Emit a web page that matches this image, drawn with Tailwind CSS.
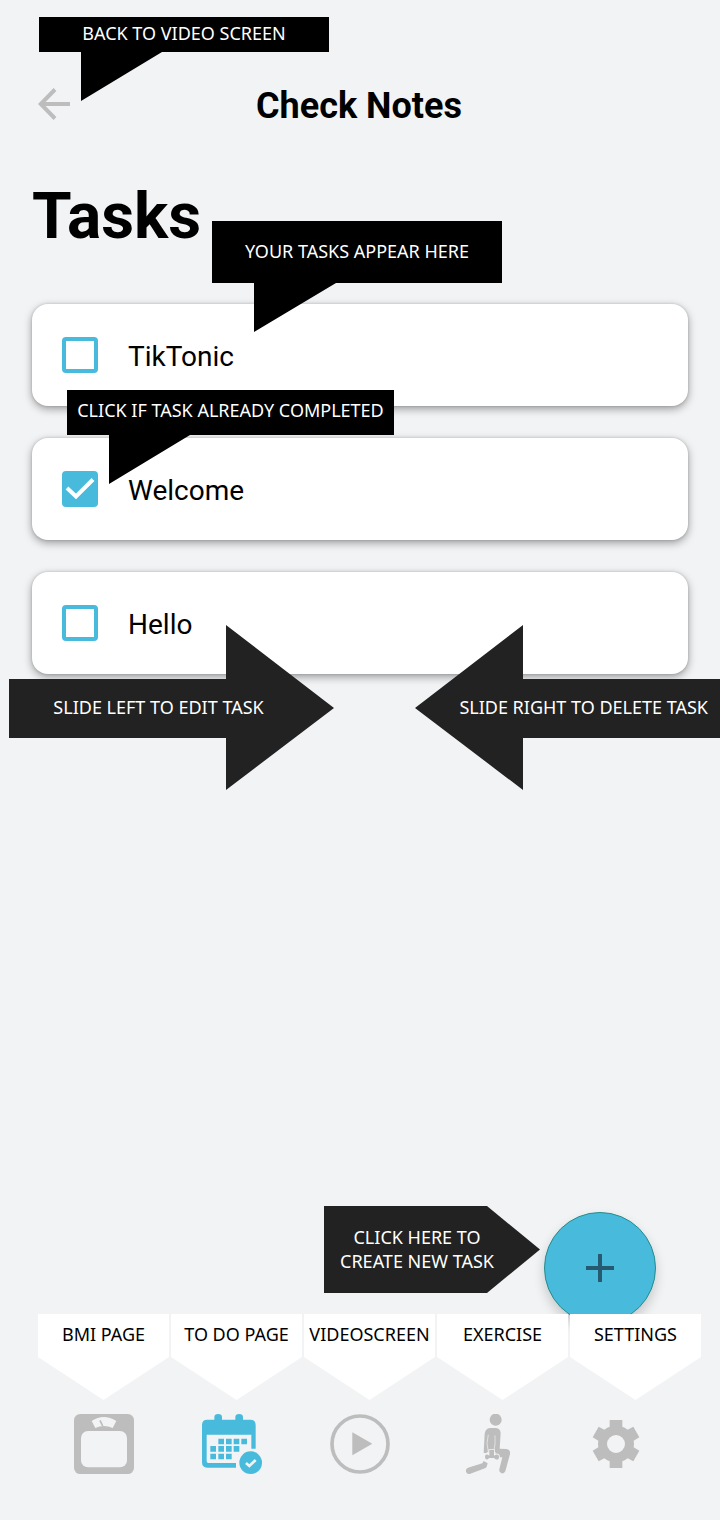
<!DOCTYPE html>
<html lang="en">
<head>
<meta charset="utf-8">
<meta name="viewport" content="width=device-width, initial-scale=1">
<title>Check Notes</title>
<script src="https://cdn.jsdelivr.net/npm/@tailwindcss/browser@4"></script>
</head>
<body class="bg-[#f1f3f5] text-black font-['Roboto',sans-serif]">
<div class="relative flex min-h-screen flex-col overflow-hidden">

  <header class="relative flex h-32 items-end px-8 pt-20">
    <button type="button" aria-label="Back" class="flex h-12 w-11 items-center justify-center text-[#bdbdbd]">
      <svg class="size-9" viewBox="0 0 36 36" fill="none" stroke="currentColor" stroke-width="4" stroke-linecap="butt" stroke-linejoin="miter"><path d="M34 18H5M19 3.500L4.800 18L19 32.500"/></svg>
    </button>
    <h2 class="flex-1 pr-[46px] text-center text-4xl leading-11 font-bold">Check Notes</h2>
    <!-- hint: back button -->
    <div class="absolute top-[17px] left-[39px] h-[84px] w-[290px] bg-black pt-1 text-center font-['Noto_Sans',sans-serif] text-lg leading-6 text-white [clip-path:polygon(0_0,100%_0,100%_35px,123px_35px,42px_84px,42px_35px,0_35px)]">BACK TO VIDEO SCREEN</div>
  </header>

  <main class="px-8 pt-12">
    <div class="relative z-10">
      <h1 class="text-[64px] leading-[82px] font-bold">Tasks</h1>
      <!-- hint: task list -->
      <div class="absolute top-[45px] left-[180px] h-[111px] w-[290px] bg-black pt-[18px] text-center font-['Noto_Sans',sans-serif] text-lg leading-6 text-white [clip-path:polygon(0_0,100%_0,100%_62px,124px_62px,42px_111px,42px_62px,0_62px)]">YOUR TASKS APPEAR HERE</div>
    </div>

    <ul class="mt-[46px] flex flex-col gap-8">
      <li class="relative rounded-2xl bg-white shadow-[0_3px_8px_rgba(0,0,0,0.36),0_0_3px_rgba(0,0,0,0.16)]">
        <label class="flex h-[102px] items-center gap-[30px] px-[30px] text-[28px] leading-9">
          <span class="grid size-9 place-items-center">
            <input type="checkbox" class="peer col-start-1 row-start-1 size-9 appearance-none rounded-[4px] border-4 border-[#48bbdd] checked:bg-[#48bbdd]">
            <svg class="pointer-events-none col-start-1 row-start-1 hidden size-9 peer-checked:block" viewBox="0 0 36 36" fill="none" stroke="#fff" stroke-width="4"><path d="M5 17L14 25.500L31 8.500"/></svg>
          </span>
          <span class="pt-1">TikTonic</span>
        </label>
      </li>
      <li class="relative rounded-2xl bg-white shadow-[0_3px_8px_rgba(0,0,0,0.36),0_0_3px_rgba(0,0,0,0.16)]">
        <label class="flex h-[102px] items-center gap-[30px] px-[30px] text-[28px] leading-9">
          <span class="grid size-9 place-items-center">
            <input type="checkbox" checked class="peer col-start-1 row-start-1 size-9 appearance-none rounded-[4px] border-4 border-[#48bbdd] checked:bg-[#48bbdd]">
            <svg class="pointer-events-none col-start-1 row-start-1 hidden size-9 peer-checked:block" viewBox="0 0 36 36" fill="none" stroke="#fff" stroke-width="4"><path d="M5 17L14 25.500L31 8.500"/></svg>
          </span>
          <span class="pt-1">Welcome</span>
        </label>
        <!-- hint: completed task -->
        <div class="absolute -top-12 left-[35px] h-[94px] w-[327px] bg-black pt-2 text-center font-['Noto_Sans',sans-serif] text-lg leading-6 whitespace-nowrap text-white [clip-path:polygon(0_0,100%_0,100%_45px,123px_45px,42px_94px,42px_45px,0_45px)]">CLICK IF TASK ALREADY COMPLETED</div>
      </li>
      <li class="relative rounded-2xl bg-white shadow-[0_3px_8px_rgba(0,0,0,0.36),0_0_3px_rgba(0,0,0,0.16)]">
        <label class="flex h-[102px] items-center gap-[30px] px-[30px] text-[28px] leading-9">
          <span class="grid size-9 place-items-center">
            <input type="checkbox" class="peer col-start-1 row-start-1 size-9 appearance-none rounded-[4px] border-4 border-[#48bbdd] checked:bg-[#48bbdd]">
            <svg class="pointer-events-none col-start-1 row-start-1 hidden size-9 peer-checked:block" viewBox="0 0 36 36" fill="none" stroke="#fff" stroke-width="4"><path d="M5 17L14 25.500L31 8.500"/></svg>
          </span>
          <span class="pt-1">Hello</span>
        </label>
        <!-- hints: swipe directions -->
        <div class="absolute top-[53px] -left-[23px] flex h-[165px] w-[325px] items-center justify-center bg-[#222] pr-[26px] pb-0.5 font-['Noto_Sans',sans-serif] text-lg leading-6 whitespace-nowrap text-white [clip-path:polygon(0_54px,217px_54px,217px_0,100%_83px,217px_100%,217px_113px,0_113px)]">SLIDE LEFT TO EDIT TASK</div>
        <div class="absolute top-[53px] -right-8 flex h-[165px] w-[305px] items-center justify-end bg-[#222] pr-3 pb-0.5 font-['Noto_Sans',sans-serif] text-lg leading-6 whitespace-nowrap text-white [clip-path:polygon(100%_54px,108px_54px,108px_0,0_83px,108px_100%,108px_113px,100%_113px)]">SLIDE RIGHT TO DELETE TASK</div>
      </li>
    </ul>
  </main>

  <footer class="relative mt-auto">
    <!-- hint: new task -->
    <div class="absolute -top-[108px] right-[180px] flex h-[87px] w-[216px] items-center bg-[#222] pr-[30px] pb-0.5 font-['Noto_Sans',sans-serif] text-lg leading-6 text-white [clip-path:polygon(0_0,163px_0,100%_50%,163px_100%,0_100%)]"><p class="w-full text-center whitespace-nowrap">CLICK HERE TO<br>CREATE NEW TASK</p></div>
    <button type="button" aria-label="New task" class="absolute -top-[102px] right-16 flex size-28 items-center justify-center rounded-full border border-[#248c8c] bg-[#48bbdd] text-[#265a70] shadow-[0_6px_12px_rgba(0,0,0,0.18)]">
      <svg class="size-7" viewBox="0 0 28 28" fill="none" stroke="currentColor" stroke-width="4"><path d="M14 0V28M0 14H28"/></svg>
    </button>

    <div class="relative flex gap-0.5 pr-[19px] pl-[38px] text-center font-['Noto_Sans',sans-serif] text-lg leading-6 whitespace-nowrap">
      <div class="flex h-[86px] min-w-0 flex-1 justify-center bg-white pt-2 [clip-path:polygon(0_0,100%_0,100%_43px,50%_100%,0_43px)]">BMI PAGE</div>
      <div class="flex h-[86px] min-w-0 flex-1 justify-center bg-white pt-2 [clip-path:polygon(0_0,100%_0,100%_43px,50%_100%,0_43px)]">TO DO PAGE</div>
      <div class="flex h-[86px] min-w-0 flex-1 justify-center bg-white pt-2 [clip-path:polygon(0_0,100%_0,100%_43px,50%_100%,0_43px)]">VIDEOSCREEN</div>
      <div class="flex h-[86px] min-w-0 flex-1 justify-center bg-white pt-2 [clip-path:polygon(0_0,100%_0,100%_43px,50%_100%,0_43px)]">EXERCISE</div>
      <div class="flex h-[86px] min-w-0 flex-1 justify-center bg-white pt-2 [clip-path:polygon(0_0,100%_0,100%_43px,50%_100%,0_43px)]">SETTINGS</div>
    </div>

    <nav class="grid h-[120px] grid-cols-5 px-10 pt-3.5 text-[#bdbdbd]">
      <a href="#bmi" aria-label="BMI" class="flex justify-center">
        <svg class="size-15" viewBox="42 42 180 180" fill="currentColor"><rect x="42" y="42" width="180" height="180" rx="19"/><rect x="63" y="93" width="138" height="109" rx="21" fill="#f1f3f5"/><path d="M95 63Q131 39 169 63L158 84Q131 72 106 84Z" fill="#f1f3f5"/><path d="M120 61L128 78" stroke="currentColor" stroke-width="5"/></svg>
      </a>
      <a href="#todo" aria-label="To do" class="flex justify-center text-[#48bbdd]">
        <svg class="size-15 overflow-visible" viewBox="36 42 180 180" fill="currentColor"><path d="M36 75Q36 59 52 59H73V51Q73 42 84.500 42Q96 42 96 51V59H136V51Q136 42 147.500 42Q159 42 159 51V59H181Q197 59 197 75V146H184V104H50V184Q50 189 55 189H138V203H52Q36 203 36 187Z"/><path d="M85 116h17v17H85zM108 116h17v17h-17zM131 116h17v17h-17zM154 116h17v17h-17zM61 138h17v17H61zM85 138h17v17H85zM108 138h17v17h-17zM131 138h17v17h-17zM61 161h17v17H61zM85 161h17v17H85zM108 161h17v17h-17z"/><circle cx="182" cy="188" r="34"/><path d="M168 189L178 198L197 180" fill="none" stroke="#f1f3f5" stroke-width="8"/></svg>
      </a>
      <a href="#video" aria-label="Video" class="flex justify-center">
        <svg class="size-15" viewBox="30 42 180 180" fill="currentColor"><circle cx="120" cy="132" r="84" fill="none" stroke="currentColor" stroke-width="11"/><path d="M97 97L157 131.500L97 166Z"/></svg>
      </a>
      <a href="#exercise" aria-label="Exercise" class="flex justify-center">
        <svg class="size-15" viewBox="24 42 180 180" fill="currentColor"><circle cx="137" cy="59" r="18"/><path d="M120 84H138Q151 85 152 99L149 146L170 147Q182 149 180 162L166 214Q163 221 155 220Q146 217 148 208L157 172H137V157H112L107 160L101 158L104 101Q106 86 120 84Z"/><path d="M101 183L113 190L110 200Q108 204 101 206L61 221Q51 224 48 215Q46 207 54 203L97 190Z"/><path d="M115 104L111 130L115 157M135 106V132L131 156" fill="none" stroke="#f1f3f5" stroke-width="2"/><path d="M105 170Q105 161 114 164L118 167V150H132V167L137 164Q147 161 147 170Q147 181 137 178L132 174H118L113 178Q105 180 105 170Z" stroke="#f1f3f5" stroke-width="5" paint-order="stroke"/></svg>
      </a>
      <a href="#settings" aria-label="Settings" class="flex justify-center">
        <svg class="size-15" viewBox="48 42 180 180" fill="currentColor"><path fill-rule="evenodd" d="M119 60H157V80Q166 83 173 89L190 80L208 112L191 122Q193 132 191 142L208 152L190 184L173 175Q166 181 157 184V204H119V184Q110 181 103 175L86 184L68 152L85 142Q83 132 85 122L68 112L86 80L103 89Q110 83 119 80ZM138 105A27 27 0 1 0 138 159A27 27 0 1 0 138 105Z"/></svg>
      </a>
    </nav>
  </footer>
</div>
</body>
</html>
